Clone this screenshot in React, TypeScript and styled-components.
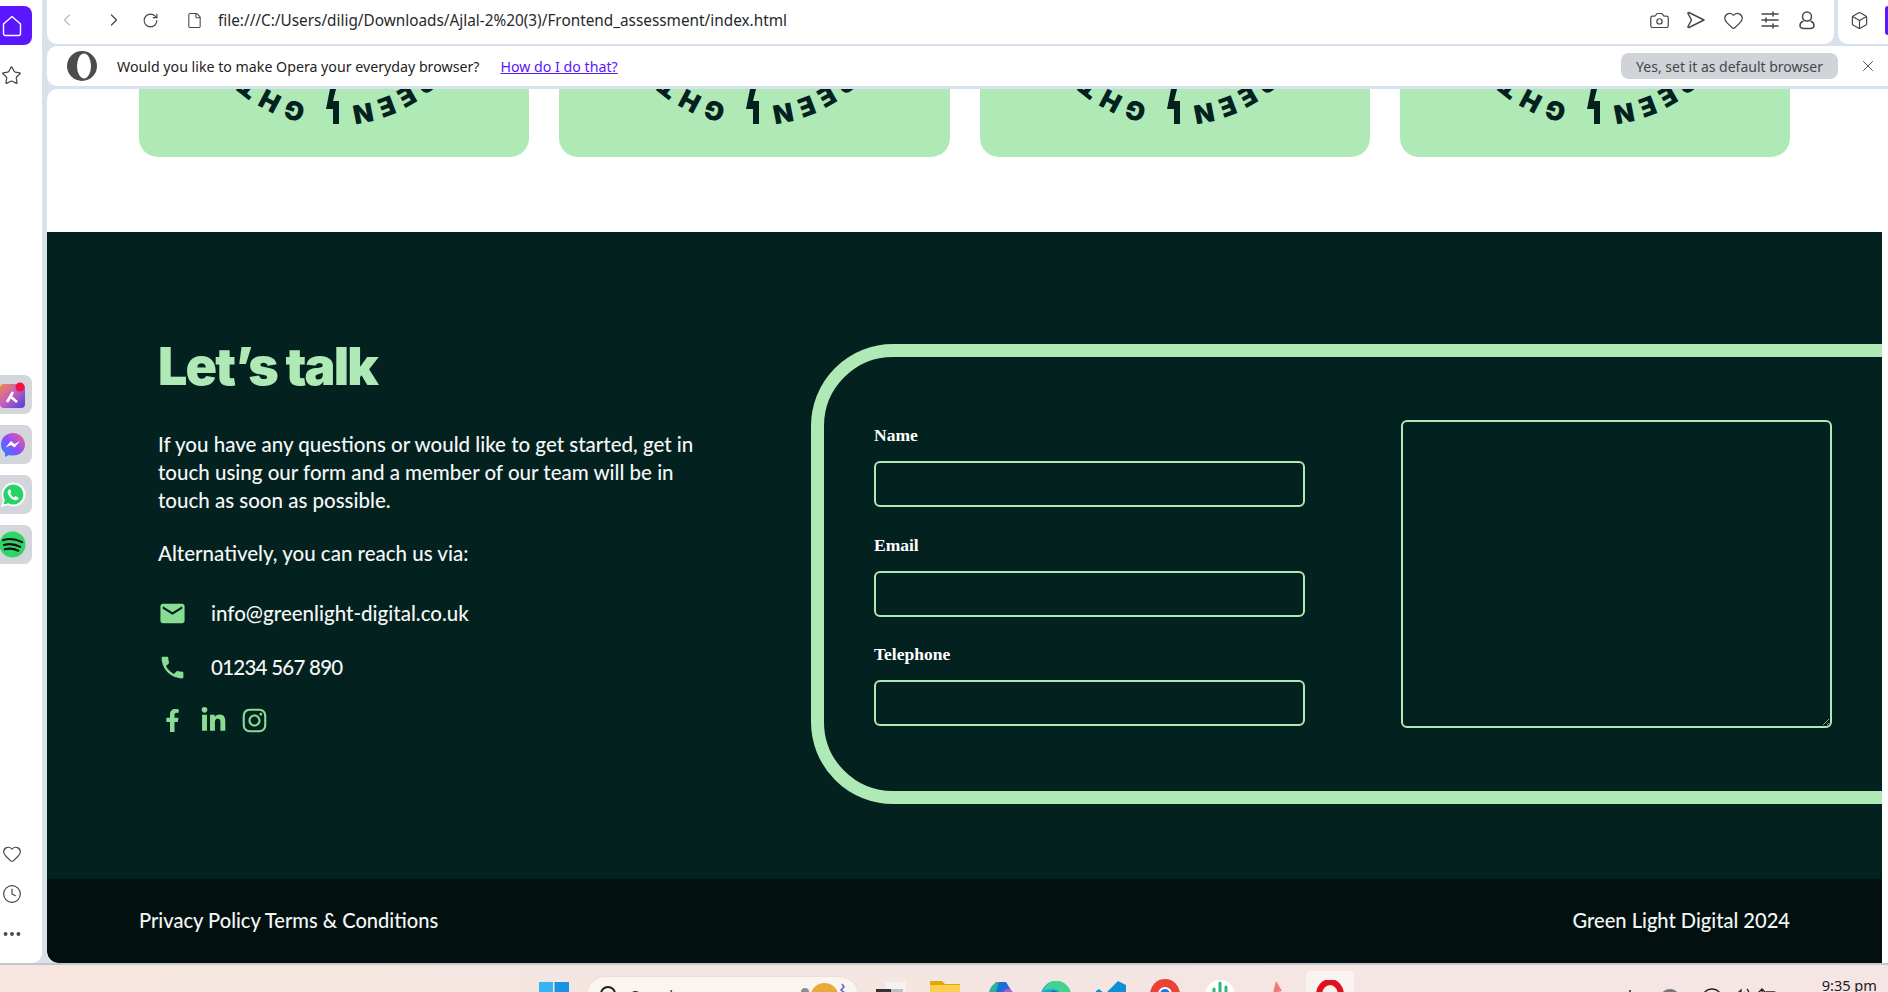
import React from "react";
import styled, { createGlobalStyle } from "styled-components";
import { ChevronLeft, ChevronRight, RotateCw, File, Camera, Heart, Box, X, Clock, MoreHorizontal, Star } from "lucide-react";
import { MdEmail, MdPhone } from "react-icons/md";
import { FaFacebookF, FaLinkedinIn, FaInstagram } from "react-icons/fa";

const Global = createGlobalStyle`
  html, body { margin: 0; padding: 0; width: 1888px; height: 992px; overflow: hidden; background: #f5e6e4; }
  * { box-sizing: border-box; }
`;

const Screen = styled.div`
  width: 1888px; height: 992px; display: flex; flex-direction: column; overflow: hidden;
  background: linear-gradient(90deg, #f6e6df, #f5e5e5);
`;
const BrowserWindow = styled.div`
  height: 965px; flex: none; display: flex; background: #d8e2ec; border-bottom: 2px solid #c4c8ce;
`;
const Sidebar = styled.aside`
  width: 42px; flex: none; margin-right: 5px; background: #fff; border-radius: 0 0 10px 0;
  display: flex; flex-direction: column; color: #43484c;
`;
const HomeTile = styled.div`
  width: 32px; height: 39px; margin-top: 6px; border-radius: 0 8px 8px 0; background: #5a17ff;
  display: flex; align-items: center; padding-left: 2px; flex: none;
`;
const SideIcon = styled.div<{ $top?: number }>`
  width: 23px; height: 20px; margin-top: ${(p) => p.$top ?? 0}px; display: flex; justify-content: center; align-items: center; flex: none;
`;
const AppGroup = styled.div`
  margin-top: 290px; display: flex; flex-direction: column; gap: 11px;
`;
const AppTile = styled.div`
  width: 32px; height: 39px; border-radius: 0 8px 8px 0; background: #d3d6da; display: flex; align-items: center; justify-content: flex-end; padding-right: 6px; overflow: hidden;
`;
const SideBottom = styled.div`
  margin-top: auto; padding-bottom: 19px; display: flex; flex-direction: column; gap: 20px;
`;
const Main = styled.div`
  flex: 1; min-width: 0; display: flex; flex-direction: column;
`;
const TopRow = styled.div`
  height: 44px; flex: none; display: flex; gap: 4px;
`;
const AddressBar = styled.div`
  flex: 1; background: #fff; border-radius: 0 0 10px 10px; display: flex; align-items: center; padding: 0 16px 4px 10px; color: #43484c;
`;
const NavSlot = styled.span<{ $gap?: number; $faded?: boolean }>`
  width: 20px; height: 20px; flex: none; display: flex; align-items: center; justify-content: center;
  margin-left: ${(p) => p.$gap ?? 0}px; color: ${(p) => (p.$faded ? "#b4b8bc" : "#43484c")};
`;
const Url = styled.span`
  margin-left: 14px; font: 15.34px "Noto Sans", sans-serif; color: #26292c; white-space: nowrap;
`;
const ActionGroup = styled.div`
  margin-left: auto; display: flex; gap: 15px; align-items: center;
`;
const ActionIcon = styled.span`
  width: 22px; height: 22px; display: flex; align-items: center; justify-content: center;
`;
const ExtTile = styled.div`
  width: 50px; flex: none; background: #fff; border-radius: 0 0 0 10px; display: flex; align-items: center; justify-content: space-between; padding: 0 0 4px 12px; color: #43484c;
`;
const ExtMark = styled.span`
  width: 3px; height: 29px; background: #5a17ff; border-radius: 3px 0 0 3px;
`;
const Notice = styled.div`
  height: 40px; flex: none; margin-top: 2px; background: #fff; border-radius: 10px 0 0 10px; display: flex; align-items: center; padding: 0 10px 0 20px;
  font: 14.2px "Noto Sans", sans-serif; color: #1f2225;
`;
const NoticeText = styled.span`
  margin-left: 20px; white-space: nowrap;
`;
const NoticeLink = styled.a`
  margin-left: 21px; color: #5a17ff; text-decoration: underline; white-space: nowrap;
`;
const DefaultButton = styled.button`
  margin-left: auto; width: 217px; height: 26px; border: 0; border-radius: 8px; background: #d0d3d7; color: #44474a; font: 14px "Noto Sans", sans-serif; padding: 0;
`;
const CloseSlot = styled.span`
  margin-left: 20px; width: 20px; height: 20px; display: flex; align-items: center; justify-content: center; color: #43484c;
`;
const PageView = styled.main`
  flex: 1; min-height: 0; margin-top: 3px; background: #fff; border-radius: 10px 0 0 10px; padding-right: 6px; display: flex; flex-direction: column; overflow: hidden;
`;
const CardRow = styled.div`
  display: grid; grid-template-columns: repeat(4, 1fr); gap: 30px; padding: 0 92px; height: 143px; flex: none;
`;
const Card = styled.div`
  height: 68px; background: #afe9b6; border-radius: 0 0 19px 19px; overflow: hidden; display: flex; justify-content: center;
`;
const ArcSvg = styled.svg`
  display: block; width: 390px; height: 68px; flex: none;
  text { font: 900 26px Inter, "Liberation Sans", sans-serif; fill: #03211f; letter-spacing: 5px; }
`;
const Contact = styled.section`
  height: 647px; flex: none; background: #03211f; overflow: hidden; padding: 112px 0 0 111px; display: flex;
`;
const Intro = styled.div`
  width: 542px; flex: none; color: #f4f7f6; font: 500 20.5px/28px Lato, sans-serif;
`;
const Title = styled.h2`
  margin: 0; color: #afe9b6; font: 900 52px/46px Inter, sans-serif; letter-spacing: -1.9px;
`;
const Para = styled.p<{ $top: number }>`
  margin: ${(p) => p.$top}px 0 0; width: 560px;
`;
const ContactRow = styled.div<{ $top: number; $tight?: boolean }>`
  margin-top: ${(p) => p.$top}px; height: 28px; display: flex; align-items: center; gap: 24px; color: #f4f7f6;
  letter-spacing: ${(p) => (p.$tight ? "-0.74px" : "0")};
  svg { color: #88dd92; flex: none; }
`;
const Socials = styled.div`
  margin-top: 25px; display: flex; align-items: center; gap: 13px; color: #88dd92;
`;
const SocialSlot = styled.span`
  width: 28px; height: 28px; display: flex; align-items: center; justify-content: center;
`;
const FormPanel = styled.form`
  margin-left: 111px; width: 1200px; height: 460px; flex: none; border: 13px solid #afe9b6; border-radius: 82px;
  padding: 62px 0 0 50px; display: grid; grid-template-columns: 431px 431px; column-gap: 96px; align-content: start;
`;
const Fields = styled.div`
  padding-top: 6px; display: flex; flex-direction: column; gap: 27.5px;
`;
const Label = styled.label`
  display: block; color: #fff; font: bold 17.5px/21px "Liberation Serif", serif; margin-bottom: 15px;
`;
const Input = styled.input`
  display: block; width: 431px; height: 46px; background: transparent; border: 2px solid #afe9b6; border-radius: 6px; outline: none;
`;
const Message = styled.textarea`
  display: block; width: 431px; height: 308px; margin-top: 1px; background: transparent; border: 2px solid #afe9b6; border-radius: 6px; outline: none;
`;
const LegalBar = styled.footer`
  flex: 1; background: #021010; border-radius: 0 0 0 12px; padding: 0 92px 2px; display: flex; align-items: center; justify-content: space-between;
  color: #f4f7f6; font: 500 20.1px Lato, sans-serif;
`;
const Taskbar = styled.div`
  flex: 1; min-height: 0; display: flex; align-items: flex-start; overflow: hidden; padding-left: 539px;
`;
const TaskIcon = styled.svg<{ $gap: number; $top?: number }>`
  width: 30px; height: 30px; flex: none; margin-left: ${(p) => p.$gap}px; margin-top: ${(p) => p.$top ?? 16}px;
`;
const SearchBox = styled.div`
  width: 273px; height: 40px; flex: none; margin: 11px 0 0 17px; border-radius: 20px; background: #fbf5f2; border: 1px solid #eadfd9; display: flex; align-items: flex-start; padding: 8px 11px 0 12px; color: #333;
  font: 15px "Noto Sans", sans-serif;
`;
const SearchGlass = styled.svg`
  width: 20px; height: 20px; flex: none; margin-right: 12px;
`;
const Medal = styled.svg`
  width: 46px; height: 30px; margin: -3px 0 0 auto; flex: none;
`;
const OperaTile = styled.div`
  width: 48px; height: 40px; margin: 6px 0 0 15px; background: #f9f3f1; border-radius: 4px; display: flex; justify-content: center; padding-top: 9px; flex: none;
`;
const TrayGroup = styled.div`
  margin-left: auto; display: flex; align-items: flex-start; padding-right: 11px; color: #2c2c2c;
`;
const TrayIcon = styled.svg<{ $gap: number; $top: number }>`
  width: 22px; height: 22px; flex: none; margin-left: ${(p) => p.$gap}px; margin-top: ${(p) => p.$top}px;
`;
const Clockface = styled.span`
  margin-left: 44px; margin-top: 10px; font: 14.6px/20px "Noto Sans", sans-serif; color: #222; white-space: nowrap;
`;

const Arc = ({ id }: { id: string }) => (
  <ArcSvg viewBox="0 0 390 68">
    <defs>
      <path id={id} d="M195 -248 A133 133 0 1 1 194.9 -248" />
    </defs>
    <text>
      <textPath href={`#${id}`} startOffset="405" textAnchor="end">GREEN</textPath>
    </text>
    <text>
      <textPath href={`#${id}`} startOffset="445">GHT</textPath>
    </text>
    <polygon points="191,0 197,0 194,12 200,12 200,35 194,35 194,20 187,20" fill="#03211f" />
  </ArcSvg>
);

const Sliders = () => (
  <svg width="20" height="20" viewBox="0 0 20 20" fill="none" stroke="currentColor" strokeWidth="1.5" strokeLinecap="round">
    <path d="M2 4h16M2 10h16M2 16h16M13 2v4M6 8v4M13 14v4" />
  </svg>
);
const Plane = () => (
  <svg width="20" height="20" viewBox="0 0 20 20" fill="none" stroke="currentColor" strokeWidth="1.5" strokeLinejoin="round">
    <path d="M3 2.500 18 10 3 17.500c-.8.3-1.200-.3-1-1L5.500 10 2 3.500c-.2-.7.2-1.300 1-1z" />
  </svg>
);
const Person = () => (
  <svg width="20" height="20" viewBox="0 0 20 20" fill="none" stroke="currentColor" strokeWidth="1.5" strokeLinejoin="round">
    <circle cx="10" cy="6.500" r="4.500" />
    <path d="M6.500 11C4 12 3 14 3 15.500 3 17.500 5 18.500 7 18.500h6c2 0 4-1 4-3 0-1.500-1-3.500-3.500-4.500" />
  </svg>
);

export default function App() {
  return (
    <>
      <Global />
      <Screen>
        <BrowserWindow>
          <Sidebar>
            <HomeTile>
              <svg width="20" height="22" viewBox="0 0 20 22" fill="none" stroke="#fff" strokeWidth="1.4" strokeLinejoin="round">
                <path d="M1.500 9 10 1.500 18.500 9v9.500a2 2 0 0 1-2 2h-13a2 2 0 0 1-2-2z" />
              </svg>
            </HomeTile>
            <SideIcon $top={20}><Star size={21} strokeWidth={1.4} /></SideIcon>
            <AppGroup>
              <AppTile>
                <svg width="26" height="26" viewBox="0 0 26 26">
                  <defs>
                    <linearGradient id="ar" x1="0" y1="0" x2="1" y2="1">
                      <stop offset="0" stopColor="#f08a3c" />
                      <stop offset=".45" stopColor="#c85fc0" />
                      <stop offset="1" stopColor="#4a41d8" />
                    </linearGradient>
                  </defs>
                  <rect x="0" y="2" width="25" height="24" rx="4" fill="url(#ar)" />
                  <path d="M7 20l6-10M11 15l6 5" stroke="#fff" strokeWidth="2.6" fill="none" />
                  <circle cx="20" cy="5" r="4.500" fill="#f5113f" />
                </svg>
              </AppTile>
              <AppTile>
                <svg width="26" height="26" viewBox="0 0 26 26">
                  <defs>
                    <linearGradient id="ms" x1="0" y1="1" x2="1" y2="0">
                      <stop offset="0" stopColor="#1e8bff" />
                      <stop offset=".5" stopColor="#8a4dff" />
                      <stop offset="1" stopColor="#ff5f7e" />
                    </linearGradient>
                  </defs>
                  <path d="M13 1C6 1 1 6 1 12.500c0 3.500 1.500 6.500 4 8.500v4l3.800-2c1.300.4 2.700.6 4.200.6 7 0 12-5 12-11.100S20 1 13 1z" fill="url(#ms)" />
                  <path d="M5.500 15.500 11 9l3.500 3 5.500-3-5.500 6.500L11 13z" fill="#fff" />
                </svg>
              </AppTile>
              <AppTile>
                <svg width="26" height="26" viewBox="0 0 26 26">
                  <path d="M1 25l2-7a12 12 0 1 1 5 5z" fill="#fff" />
                  <path d="M3.500 22.500l1.300-4.700a10 10 0 1 1 3.500 3.400z" fill="#25d366" />
                  <path d="M9 7.500c-1.500 1-1.800 3-.5 5.500 1.500 2.800 4 4.800 6.500 5.200 1.500.2 3-.5 3.500-1.800l-.3-1-2.700-1.300-1.200 1.300c-1.600-.6-3.200-2.200-4-4l1-1.300-1-2.600z" fill="#fff" />
                </svg>
              </AppTile>
              <AppTile>
                <svg width="27" height="27" viewBox="0 0 27 27" fill="none">
                  <circle cx="13" cy="13.500" r="13.500" fill="#2fd566" />
                  <path d="M3 9c6-2 14-1 20 2M4 14c5-1.500 12-.8 17 2M5 18.500c4-1 10-.6 14 1.500" stroke="#111" strokeWidth="2.200" strokeLinecap="round" />
                </svg>
              </AppTile>
            </AppGroup>
            <SideBottom>
              <SideIcon><Heart size={20} strokeWidth={1.4} /></SideIcon>
              <SideIcon><Clock size={20} strokeWidth={1.4} /></SideIcon>
              <SideIcon><MoreHorizontal size={22} strokeWidth={2.2} /></SideIcon>
            </SideBottom>
          </Sidebar>
          <Main>
            <TopRow>
              <AddressBar>
                <NavSlot $faded><ChevronLeft size={20} strokeWidth={1.3} /></NavSlot>
                <NavSlot $gap={27}><ChevronRight size={20} strokeWidth={1.5} /></NavSlot>
                <NavSlot $gap={16}><RotateCw size={17} strokeWidth={1.6} /></NavSlot>
                <NavSlot $gap={24}><File size={17} strokeWidth={1.5} /></NavSlot>
                <Url>file:///C:/Users/dilig/Downloads/Ajlal-2%20(3)/Frontend_assessment/index.html</Url>
                <ActionGroup>
                  <ActionIcon><Camera size={21} strokeWidth={1.4} /></ActionIcon>
                  <ActionIcon><Plane /></ActionIcon>
                  <ActionIcon><Heart size={21} strokeWidth={1.4} /></ActionIcon>
                  <ActionIcon><Sliders /></ActionIcon>
                  <ActionIcon><Person /></ActionIcon>
                </ActionGroup>
              </AddressBar>
              <ExtTile>
                <Box size={19} strokeWidth={1.5} />
                <ExtMark />
              </ExtTile>
            </TopRow>
            <Notice>
              <svg width="30" height="30" viewBox="0 0 30 30">
                <circle cx="15" cy="15" r="15" fill="#4a4d4c" />
                <ellipse cx="17" cy="15" rx="7" ry="12.500" fill="#fff" />
              </svg>
              <NoticeText>Would you like to make Opera your everyday browser?</NoticeText>
              <NoticeLink>How do I do that?</NoticeLink>
              <DefaultButton type="button">Yes, set it as default browser</DefaultButton>
              <CloseSlot><X size={18} strokeWidth={1.3} /></CloseSlot>
            </Notice>
            <PageView>
              <CardRow>
                <Card><Arc id="a1" /></Card>
                <Card><Arc id="a2" /></Card>
                <Card><Arc id="a3" /></Card>
                <Card><Arc id="a4" /></Card>
              </CardRow>
              <Contact>
                <Intro>
                  <Title>Let’s talk</Title>
                  <Para $top={40}>If you have any questions or would like to get started, get in touch using our form and a member of our team will be in touch as soon as possible.</Para>
                  <Para $top={25}>Alternatively, you can reach us via:</Para>
                  <ContactRow $top={32}><MdEmail size={29} />info@greenlight-digital.co.uk</ContactRow>
                  <ContactRow $top={26} $tight><MdPhone size={29} />01234 567 890</ContactRow>
                  <Socials>
                    <SocialSlot><FaFacebookF size={23} /></SocialSlot>
                    <SocialSlot><FaLinkedinIn size={27} /></SocialSlot>
                    <SocialSlot><FaInstagram size={27} /></SocialSlot>
                  </Socials>
                </Intro>
                <FormPanel>
                  <Fields>
                    <div><Label>Name</Label><Input /></div>
                    <div><Label>Email</Label><Input /></div>
                    <div><Label>Telephone</Label><Input /></div>
                  </Fields>
                  <Message />
                </FormPanel>
              </Contact>
              <LegalBar>
                <span>Privacy Policy Terms &amp; Conditions</span>
                <span>Green Light Digital 2024</span>
              </LegalBar>
            </PageView>
          </Main>
        </BrowserWindow>
        <Taskbar>
          <TaskIcon $gap={0} viewBox="0 0 30 30">
            <path d="M0 1h14v14H0z" fill="#36b4f2" />
            <path d="M15.500 1H30v14H15.500z" fill="#1a93e4" />
          </TaskIcon>
          <SearchBox>
            <SearchGlass viewBox="0 0 20 20" fill="none" stroke="#222" strokeWidth="2"><circle cx="9" cy="9" r="7" /></SearchGlass>
            Search
            <Medal viewBox="0 0 46 30">
              <circle cx="4" cy="10" r="4" fill="#8c8c8c" />
              <circle cx="23.500" cy="15" r="14" fill="#eba93a" />
              <path d="M41 2l2 3-3 3 4 3" stroke="#5a5fd6" strokeWidth="1.500" fill="none" />
            </Medal>
          </SearchBox>
          <TaskIcon $gap={17} viewBox="0 0 30 30">
            <rect x="10" y="1" width="20" height="12" fill="#f4f2f2" />
            <rect x="0" y="8" width="15" height="8" fill="#333" />
            <rect x="15" y="8" width="12" height="8" fill="#bdbdbd" />
          </TaskIcon>
          <TaskIcon $gap={24} viewBox="0 0 30 30">
            <path d="M0 0h12l3 3h15v6H0z" fill="#e5a50a" />
            <path d="M0 4h30v26H0z" fill="#fcd04f" />
          </TaskIcon>
          <TaskIcon $gap={26} viewBox="0 0 30 30">
            <path d="M2 14 10 1h10l8 13z" fill="#1a6fd8" />
            <path d="M2 14C4 6 8 1 13 1L9 14z" fill="#2bb3a0" />
            <circle cx="22" cy="13" r="5" fill="#c455d6" />
          </TaskIcon>
          <TaskIcon $gap={25} viewBox="0 0 30 30">
            <circle cx="15" cy="15" r="15" fill="#19a3d6" />
            <path d="M15 0c8 0 15 6 15 15H20C19 8 12 6 2 10 5 4 9 0 15 0z" fill="#3fd48f" />
            <circle cx="13" cy="15" r="5" fill="#0d5fb0" />
          </TaskIcon>
          <TaskIcon $gap={25} viewBox="0 0 30 30">
            <path d="M22 0 30 4v22l-8 4L9 17l-6 5-3-2V10l3-2 6 5z" fill="#0f8fd8" />
          </TaskIcon>
          <TaskIcon $gap={24} $top={14} viewBox="0 0 30 30">
            <circle cx="15" cy="15" r="15" fill="#ea4335" />
            <path d="M2 22 15 15l13 7a15 15 0 0 1-26 0z" fill="#fbbc05" />
            <circle cx="15" cy="15" r="7" fill="#fff" />
            <circle cx="15" cy="15" r="5" fill="#1a73e8" />
          </TaskIcon>
          <TaskIcon $gap={25} $top={15} viewBox="0 0 30 30">
            <circle cx="15" cy="15" r="15" fill="#fff" />
            <path d="M15 3v9M9 9v6M21 7v8" stroke="#2eb67d" strokeWidth="3" strokeLinecap="round" />
            <path d="M7 15h16" stroke="#e01e5a" strokeWidth="3" />
          </TaskIcon>
          <TaskIcon $gap={26} viewBox="0 0 30 30">
            <path d="M15 0 21 10 12 12z" fill="#f07a7a" />
            <path d="M8 12 0 26h14z" fill="#f5a5a0" />
            <path d="M20 12 30 26H14z" fill="#9ed8c0" />
          </TaskIcon>
          <OperaTile>
            <svg width="28" height="30" viewBox="0 0 28 30">
              <ellipse cx="14" cy="15" rx="11" ry="13" fill="none" stroke="#e1121f" strokeWidth="6" />
            </svg>
          </OperaTile>
          <TrayGroup>
            <TrayIcon $gap={0} $top={22} viewBox="0 0 22 22" fill="none" stroke="#222" strokeWidth="1.500"><path d="M11 3v6" /></TrayIcon>
            <TrayIcon $gap={18} $top={23} viewBox="0 0 22 22" fill="#777"><ellipse cx="11" cy="9" rx="9" ry="8" /></TrayIcon>
            <TrayIcon $gap={20} $top={23} viewBox="0 0 22 22" fill="none" stroke="#222" strokeWidth="1.300"><circle cx="11" cy="11" r="10" /><circle cx="11" cy="11" r="6" /></TrayIcon>
            <TrayIcon $gap={6} $top={21} viewBox="0 0 22 22" fill="none" stroke="#222" strokeWidth="1.300"><path d="M3 9h4l5-5v14l-5-5H3zM15 6c2 2 2 6 0 8M18 3c3 3 3 10 0 14" /></TrayIcon>
            <TrayIcon $gap={5} $top={21} viewBox="0 0 22 22" fill="none" stroke="#222" strokeWidth="1.300"><path d="M6 15V3M2 7l4-4 4 4M10 6h8a2 2 0 0 1 2 2v8" /></TrayIcon>
            <Clockface>9:35 pm</Clockface>
          </TrayGroup>
        </Taskbar>
      </Screen>
    </>
  );
}
